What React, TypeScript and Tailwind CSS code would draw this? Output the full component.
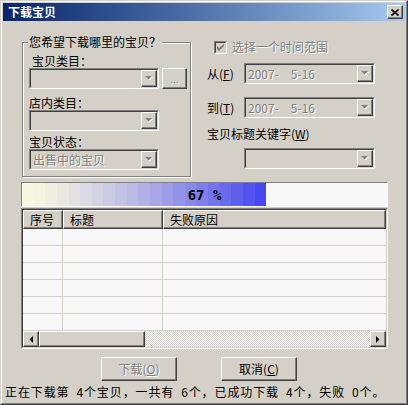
import React from "react";

const raised =
  "border border-t-white border-l-white border-r-[#404040] border-b-[#404040] shadow-[inset_-1px_-1px_0_#808080]";
const sunkenOuter =
  "border border-t-[#808080] border-l-[#808080] border-r-white border-b-white";
const sunkenInner =
  "border border-t-[#404040] border-l-[#404040] border-r-[#d4d0c8] border-b-[#d4d0c8]";
const grayText = "text-[#808080] [text-shadow:1px_1px_0_#fff]";

function DownArrow() {
  return (
    <svg width="8" height="5" viewBox="0 0 8 5">
      <polygon points="1,1 8,1 4.5,4.5" fill="#fff" />
      <polygon points="0,0 7,0 3.5,3.5" fill="#808080" />
    </svg>
  );
}

function Combo(props: { size: string; value?: string }) {
  return (
    <div className={`${props.size} flex ${sunkenOuter}`}>
      <div className={`flex flex-1 ${sunkenInner}`}>
        <div className={`flex-1 pl-[2px] pt-[3px] text-[12px] leading-[12px] whitespace-pre ${grayText}`}>
          {props.value}
        </div>
        <div className={`w-[16px] flex items-center justify-center ${raised}`}>
          <DownArrow />
        </div>
      </div>
    </div>
  );
}

function ScrollArrow(props: { dir: "left" | "right" }) {
  return (
    <div className={`w-[16px] h-full flex items-center justify-center ${raised}`}>
      <svg width="4" height="7" viewBox="0 0 4 7">
        {props.dir === "left" ? (
          <polygon points="4,0 4,7 0.5,3.5" fill="#000" />
        ) : (
          <polygon points="0,0 0,7 3.5,3.5" fill="#000" />
        )}
      </svg>
    </div>
  );
}

const blocks = Array.from({ length: 21 }, (_, i) => {
  const t = Math.pow(i / 20, 1.3);
  const rg = Math.round(248 - (248 - 72) * t);
  const b = Math.round(224 + (240 - 224) * t);
  return `rgb(${rg},${rg},${b})`;
});

export default function App() {
  return (
    <div className="w-[408px] h-[405px] bg-[#d4d0c8] border border-t-[#d4d0c8] border-l-[#d4d0c8] border-r-[#404040] border-b-[#404040] font-['Noto_Sans_CJK_SC',sans-serif] text-black">
      <div className="h-full border border-t-white border-l-white border-r-[#808080] border-b-[#808080] p-px flex flex-col">
        {/* title bar */}
        <div className="h-[18px] flex items-center bg-linear-to-r from-[#0a246a] to-[#a6caf0]">
          <span className="ml-[5px] text-white font-bold text-[12px] leading-[12px]">下载宝贝</span>
          <div className={`ml-auto mr-[2px] w-[16px] h-[14px] flex items-center justify-center bg-[#d4d0c8] ${raised}`}>
            <svg width="8" height="7" viewBox="0 0 8 7">
              <path d="M0.5 0.5 L7.5 6.5 M7.5 0.5 L0.5 6.5" stroke="#000" strokeWidth="1.6" />
            </svg>
          </div>
        </div>

        {/* top section */}
        <div className="flex h-[155px]">
          <div className="relative ml-[19px] mt-[21px] w-[169px] h-[135px] border border-[#808080] shadow-[inset_1px_1px_0_#fff,1px_1px_0_#fff]">
            <span className="absolute left-[5px] -top-[7px] px-px bg-[#d4d0c8] text-[12px] leading-[12px]">
              您希望下载哪里的宝贝？
            </span>
            <div className="flex flex-col pl-[6px] pt-[12px]">
              <span className="ml-[3px] text-[12px] leading-[12px]">宝贝类目：</span>
              <div className="flex mt-[1px] gap-[3px]">
                <Combo size="w-[130px] h-[21px]" />
                <div className={`w-[25px] h-[21px] flex items-center justify-center text-[10px] leading-[10px] ${grayText} ${raised}`}>
                  ...
                </div>
              </div>
              <span className="mt-[8px] text-[12px] leading-[12px]">店内类目：</span>
              <div className="mt-[1px]">
                <Combo size="w-[130px] h-[21px]" />
              </div>
              <span className="mt-[5px] text-[12px] leading-[12px]">宝贝状态：</span>
              <div className="mt-[1px]">
                <Combo size="w-[130px] h-[21px]" value="出售中的宝贝" />
              </div>
            </div>
          </div>

          <div className="ml-[16px] mt-[19px] flex flex-col">
            <div className="flex items-center h-[14px]">
              <div className={`ml-[7px] w-[13px] h-[13px] flex items-center justify-center ${sunkenOuter}`}>
                <div className={`w-full h-full flex items-center justify-center ${sunkenInner}`}>
                  <svg width="7" height="7" viewBox="0 0 7 7">
                    <polygon points="0,2 0,5 2,7 7,2 7,-0.2 2,4" fill="#808080" />
                  </svg>
                </div>
              </div>
              <span className={`ml-[5px] text-[12px] leading-[12px] ${grayText}`}>选择一个时间范围</span>
            </div>
            <div className="flex items-center mt-[9px]">
              <span className="w-[37px] text-[12px] leading-[12px]">
                从(<span className="underline">F</span>)
              </span>
              <Combo size="w-[131px] h-[21px]" value={"2007-\u2002\u20025-16"} />
            </div>
            <div className="flex items-center mt-[13px]">
              <span className="w-[37px] text-[12px] leading-[12px]">
                到(<span className="underline">T</span>)
              </span>
              <Combo size="w-[131px] h-[21px]" value={"2007-\u2002\u20025-16"} />
            </div>
            <span className="mt-[9px] text-[12px] leading-[14px]">
              宝贝标题关键字(<span className="underline">W</span>)
            </span>
            <div className="ml-[37px] mt-[7px]">
              <Combo size="w-[131px] h-[21px]" />
            </div>
          </div>
        </div>

        {/* progress */}
        <div className={`ml-[18px] mt-[6px] w-[367px] h-[25px] relative flex bg-[#f8f8f8] ${sunkenOuter}`}>
          <div className="flex h-full w-[244px]">
            {blocks.map((c, i) => (
              <div key={i} className="h-full flex-1" style={{ backgroundColor: c }} />
            ))}
          </div>
          <span className="absolute inset-0 flex items-center justify-center font-bold text-[14px] leading-[14px] font-['DejaVu_Sans_Mono',monospace]">
            67 %
          </span>
        </div>

        {/* list view */}
        <div className={`ml-[18px] mt-[1px] w-[367px] h-[141px] ${sunkenOuter}`}>
          <div className={`h-full flex flex-col bg-[#f8f8f8] ${sunkenInner}`}>
            <div className="flex h-[19px] bg-[#d4d0c8] text-[12px] leading-[12px]">
              <div className={`w-[40px] pl-[6px] pt-[3px] ${raised}`}>序号</div>
              <div className={`w-[100px] pl-[6px] pt-[3px] ${raised}`}>标题</div>
              <div className={`flex-1 pl-[6px] pt-[3px] ${raised}`}>失败原因</div>
            </div>
            <div className="flex flex-col flex-1">
              {[0, 1, 2, 3, 4, 5].map((r) => (
                <div key={r} className="flex h-[17px] border-b border-[#d4d0c8]">
                  <div className="w-[40px] border-r border-[#d4d0c8]" />
                  <div className="w-[100px] border-r border-[#d4d0c8]" />
                  <div className="flex-1" />
                </div>
              ))}
            </div>
            <div className="flex h-[16px] bg-[#d4d0c8]">
              <ScrollArrow dir="left" />
              <div className={`w-[106px] bg-[#d4d0c8] ${raised}`} />
              <div className="flex-1 bg-[image:repeating-conic-gradient(#fff_0_25%,#d4d0c8_0_50%)] bg-[length:2px_2px]" />
              <ScrollArrow dir="right" />
            </div>
          </div>
        </div>

        {/* buttons */}
        <div className="flex mt-[8px] ml-[98px] gap-[44px]">
          <div className={`w-[76px] h-[24px] flex items-center justify-center text-[12px] leading-[12px] ${grayText} ${raised}`}>
            下载(<span className="underline">O</span>)
          </div>
          <div className={`w-[76px] h-[24px] flex items-center justify-center text-[12px] leading-[12px] ${raised}`}>
            取消(<span className="underline">C</span>)
          </div>
        </div>

        <div className="mt-[5px] ml-[2px] text-[12px] leading-[12px] whitespace-pre tracking-[0.9px]">
          {"正在下载第\u20024个宝贝，一共有\u20026个，已成功下载\u20024个，失败\u20020个。"}
        </div>
      </div>
    </div>
  );
}
